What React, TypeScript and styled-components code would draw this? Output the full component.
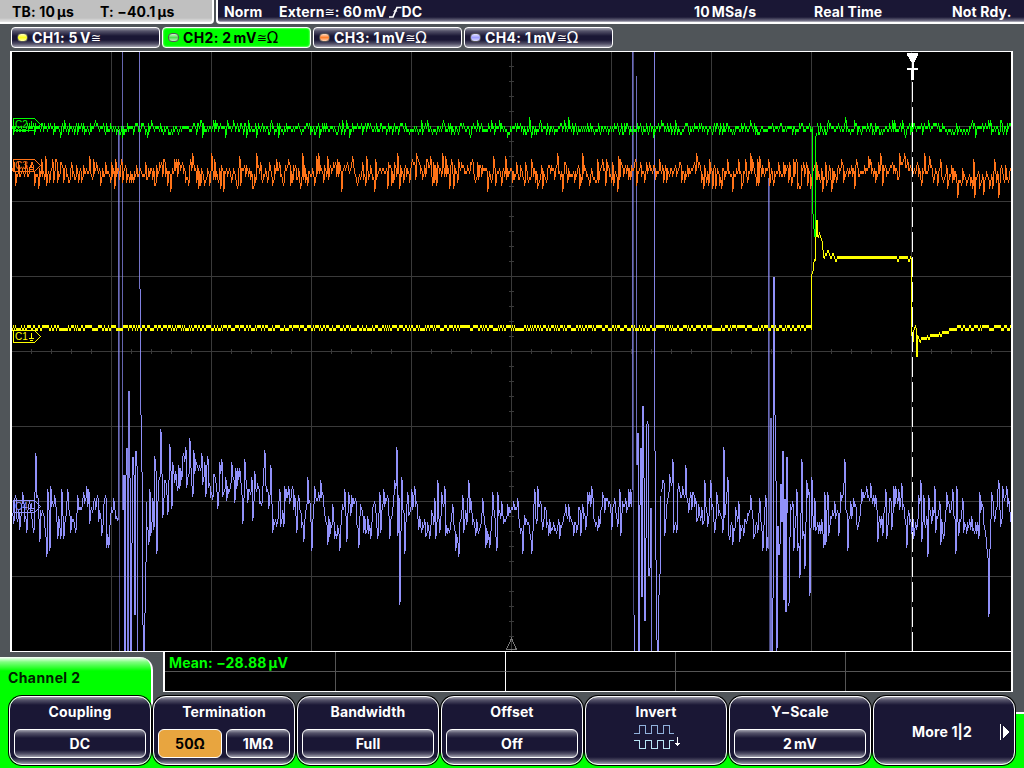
import React from 'react';
import styled, { createGlobalStyle, css } from 'styled-components';

type Point = [number, number];
type Segment = [number, number, number, number?];

const GREEN = '#00ff00';
const ORANGE = '#ff7318';
const YELLOW = '#ffff00';
const VIOLET = '#9191fa';

const createRandom = (seed: number) => {
  let state = seed;
  return () => {
    state = (state * 1664525 + 1013904223) >>> 0;
    return state / 4294967296;
  };
};

const interpolate = (points: Point[], x: number) => {
  for (let i = 1; i < points.length; i += 1) {
    const [x0, y0] = points[i - 1];
    const [x1, y1] = points[i];
    if (x <= x1) return y0 + ((y1 - y0) * Math.max(0, x - x0)) / (x1 - x0);
  }
  return points[points.length - 1][1];
};

interface NoiseOptions {
  seed: number;
  from: number;
  to: number;
  baseline: Point[];
  spread: number;
  spikeChance?: number;
  spikeSize?: number;
  peaks?: Point[];
}

// one sample per pixel column, quantised to the 3px steps of the ADC
const noise = ({ seed, from, to, baseline, spread, spikeChance = 0, spikeSize = 0, peaks = [] }: NoiseOptions) => {
  const random = createRandom(seed);
  const fixed = new Map(peaks);
  const samples: Point[] = [];
  for (let x = from; x <= to; x += 1) {
    const base = interpolate(baseline, x);
    let value = base + (random() + random() - 1) * spread;
    if (random() < spikeChance) value = base + (random() > 0.5 ? 1 : -1) * spikeSize * (0.6 + random() * 0.4);
    samples.push([x, fixed.get(x) ?? Math.round(value / 3) * 3 + 1]);
  }
  return samples;
};

// each column runs from its own level up to, but not over, the previous one
const tracePath = (samples: Point[]) =>
  samples
    .map(([x, y], i) => {
      const previous = i > 0 ? samples[i - 1][1] : y;
      const top = previous < y ? Math.min(previous + 2, y - 1) : y - 1;
      const bottom = previous > y ? Math.max(previous - 1, y + 2) : y + 2;
      return `M${x + 0.5} ${top}V${bottom}`;
    })
    .join('');

const ch4Baseline: Point[] = [
  [12, 512], [100, 508], [118, 512], [147, 520], [160, 490], [175, 474], [200, 470], [225, 479],
  [250, 488], [280, 503], [310, 508], [340, 512], [400, 508], [440, 515], [500, 518], [560, 518],
  [600, 508], [660, 498], [690, 500], [720, 512], [780, 520], [830, 512], [870, 504], [910, 514],
  [960, 518], [1011, 502],
];

const ch4Peaks: Point[] = [
  [12, 488], [14, 522], [16, 496], [20, 528], [23, 493], [27, 531], [30, 502], [34, 531], [36, 454], [38, 496],
  [40, 540], [43, 511], [47, 555], [48, 490], [50, 549], [51, 487], [55, 496], [58, 537], [61, 537], [62, 490],
  [64, 537], [68, 490], [71, 531], [76, 531], [78, 496], [83, 499], [87, 487], [89, 490], [90, 522], [98, 496],
  [102, 534], [106, 496], [107, 546], [109, 546], [114, 499], [118, 519],
  [148, 528], [149, 543], [150, 490], [151, 534], [153, 499], [154, 528], [155, 457], [156, 469], [157, 552],
  [159, 481], [161, 430], [163, 516], [166, 481], [168, 513], [170, 445], [172, 507], [173, 463], [178, 489],
  [183, 457], [186, 448], [187, 486], [190, 439], [193, 495], [194, 451], [202, 454], [203, 483], [205, 463],
  [206, 495], [208, 457], [209, 486], [213, 498], [215, 475], [218, 507], [220, 463], [222, 460], [223, 495],
  [229, 492], [232, 463], [235, 501], [236, 469], [240, 469], [243, 522], [245, 460], [248, 501], [252, 478],
  [253, 519], [255, 472], [262, 504], [265, 451], [269, 507], [271, 466], [273, 531], [277, 525], [280, 490],
  [281, 525], [284, 525], [285, 487], [293, 487], [297, 531], [299, 496], [304, 540], [308, 478], [310, 501],
  [312, 549], [315, 487], [319, 493], [321, 481], [323, 493], [328, 543], [333, 505], [335, 537], [337, 537],
  [340, 549], [345, 490], [347, 540], [349, 493], [356, 499], [359, 546], [361, 505], [364, 531], [367, 531],
  [371, 537], [375, 502], [378, 537], [380, 493], [381, 531], [384, 490], [388, 496], [390, 537], [395, 481],
  [397, 448], [398, 534], [399, 496], [400, 603], [402, 478], [405, 552], [408, 493], [410, 513], [412, 490],
  [415, 487], [419, 528], [422, 531], [427, 534], [430, 537], [435, 499], [436, 537], [438, 481], [440, 531],
  [442, 493], [445, 487], [446, 534], [450, 531], [453, 505], [456, 549], [459, 555], [463, 496], [464, 531],
  [469, 481], [471, 499], [476, 534], [481, 525], [483, 499], [486, 546], [490, 546], [493, 493], [495, 516],
  [497, 549], [498, 493], [502, 502], [504, 522], [508, 505], [514, 502], [518, 499], [523, 552], [525, 516],
  [532, 552], [535, 490], [537, 522], [538, 487], [543, 528], [545, 508], [549, 534], [553, 528], [560, 537],
  [565, 514], [569, 505], [574, 534], [577, 531], [580, 508], [581, 534], [583, 505], [586, 528], [588, 493],
  [592, 487], [596, 525], [600, 525], [603, 493], [610, 502], [612, 528], [615, 499], [618, 525], [620, 490],
  [621, 534], [623, 502], [631, 490],
  [662, 490], [664, 481], [665, 534], [670, 475], [673, 460], [674, 531], [677, 531], [678, 490], [682, 496],
  [686, 466], [688, 501], [693, 493], [698, 519], [701, 519], [704, 522], [705, 481], [708, 525], [711, 481],
  [715, 531], [717, 493], [723, 531], [724, 448], [725, 516], [728, 478], [729, 534], [733, 543], [739, 502],
  [740, 540], [744, 534], [747, 522], [751, 496], [754, 537], [758, 531], [760, 499], [763, 549], [766, 496], [767, 549],
  [789, 604], [791, 505], [793, 502], [794, 549], [797, 490], [798, 549], [800, 576], [802, 460], [803, 537],
  [805, 567], [807, 481], [809, 490], [810, 594], [812, 478], [814, 528], [815, 499], [817, 528], [824, 546],
  [825, 493], [826, 543], [828, 493], [829, 534], [835, 502], [839, 534], [841, 493], [845, 460],
  [848, 549], [851, 502], [855, 505], [858, 528], [862, 490], [864, 493], [871, 484], [876, 496], [878, 540],
  [883, 534], [886, 490], [887, 537], [890, 499], [892, 528], [894, 487], [902, 484], [907, 546], [909, 511],
  [914, 537], [917, 528], [919, 496], [921, 481], [922, 540], [924, 496], [928, 555], [929, 496], [932, 522],
  [935, 487], [936, 531], [940, 502], [941, 543], [944, 537], [947, 493], [953, 490], [956, 552], [957, 487],
  [959, 534], [963, 499], [964, 531], [966, 525], [971, 528], [979, 537], [980, 493], [985, 528], [989, 615],
  [990, 550], [992, 493], [996, 511], [999, 481], [1001, 525], [1003, 487], [1007, 487], [1010, 510],
];

const ch4Bursts: Segment[] = [
  [118, 130, 520, 0.75], [119, 130, 651, 0.5], [122, 51, 510, 0.7], [123, 475, 510], [124, 475, 651],
  [125, 475, 651], [126, 448, 475], [127, 448, 651, 0.9], [128, 391, 651, 0.9], [129, 391, 478, 0.9],
  [130, 478, 651], [131, 543, 651], [132, 457, 543], [133, 457, 475], [134, 475, 615], [135, 451, 615],
  [136, 451, 466], [137, 466, 651, 0.9], [139, 51, 289, 0.8], [140, 289, 415, 0.9], [141, 415, 472],
  [142, 472, 625], [143, 625, 651], [144, 613, 651], [145, 562, 613], [146, 502, 562],
  [632, 51, 490, 0.75], [633, 51, 615, 0.5], [634, 615, 651], [636, 76, 465, 0.75], [637, 433, 465],
  [638, 433, 651], [639, 505, 651], [640, 448, 505], [641, 448, 597], [642, 406, 597], [643, 406, 478],
  [644, 478, 621], [645, 538, 621], [646, 424, 538], [647, 421, 424], [648, 424, 576], [649, 568, 576],
  [650, 508, 568], [651, 508, 651, 0.9], [654, 51, 451, 0.9], [655, 451, 560], [656, 560, 640],
  [657, 640, 651], [658, 595, 651], [659, 574, 595], [660, 496, 574],
  [768, 178, 549, 0.75], [769, 178, 651, 0.5], [770, 418, 651, 0.8], [771, 418, 651, 0.8], [772, 598, 651],
  [773, 277, 598], [774, 277, 415], [775, 415, 481], [776, 481, 651], [777, 526, 648], [778, 526, 555],
  [779, 544, 555], [780, 484, 544], [781, 484, 522], [782, 451, 522], [783, 451, 600], [784, 499, 600],
  [785, 499, 612], [786, 457, 612], [787, 457, 513],
];

const ch4Quiet: Point[] = [[12, 117], [147, 631], [661, 767], [788, 1010]];

// the extremes sit on the rising side of each two-column spike
const ch4Extremes = ch4Peaks.map(([x, y]): Point => [x - 1, y]);

// halfway between the noise floor and a straight line through the extremes
const ch4Floor = range(1000).map((i): Point => {
  const x = i + 12;
  return [x, interpolate(ch4Baseline, x) * 0.45 + interpolate(ch4Extremes, x) * 0.55];
});

const ch4Traces = ch4Quiet.map(([from, to], i) =>
  noise({ seed: 41 + i, from, to, baseline: ch4Floor, spread: 14, peaks: ch4Extremes }),
);

const ch3Trace = noise({
  seed: 37,
  from: 12,
  to: 1010,
  baseline: [[12, 171], [800, 171], [915, 170], [950, 177], [1011, 177]],
  spread: 14,
  spikeChance: 0.11,
  spikeSize: 19,
});

const ch2Options = { baseline: [[12, 127], [1011, 127]] as Point[], spread: 7, spikeChance: 0.05, spikeSize: 9 };
const ch2Traces = [
  noise({ ...ch2Options, seed: 5, from: 12, to: 811 }),
  noise({ ...ch2Options, seed: 8, from: 817, to: 1010 }),
];
const ch2Pulse: Segment[] = [[812, 127, 214], [813, 214, 229], [814, 229, 237], [815, 136, 237], [816, 133, 136]];

const idleLine = (seed: number, from: number, to: number) => {
  const random = createRandom(seed);
  let high = true;
  const samples: Point[] = [];
  for (let x = from; x <= to; x += 1) {
    if (random() < 0.42) high = !high;
    samples.push([x, high ? 326 : 329]);
  }
  return samples;
};

const flatTop = () => {
  const samples: Point[] = [];
  for (let x = 824; x <= 910; x += 1) {
    let y = 257;
    if (x < 838) y = [257, 254, 254, 251, 251, 254, 257, 257, 254, 254, 257, 260, 260, 257][x - 824];
    if (x === 897 || x === 898 || x === 908 || x === 909) y = 260;
    samples.push([x, y]);
  }
  return samples;
};

const recovery = () => {
  const samples: Point[] = [];
  for (let x = 918; x <= 955; x += 1) {
    let y = 338;
    if (x < 921) y = [337, 340, 341][x - 918];
    else if (x > 948) y = 329;
    else if (x > 941) y = 332;
    else if (x > 929) y = 335;
    if (x === 927 || x === 939) y -= 2;
    samples.push([x, y]);
  }
  return samples;
};

const ch1Traces = [idleLine(12, 12, 810), flatTop(), recovery(), idleLine(77, 956, 1010)];
const ch1Pulse: Segment[] = [
  [811, 274, 330], [812, 271, 274], [813, 262, 271], [814, 259, 262], [815, 220, 261], [816, 220, 237],
  [817, 220, 237], [818, 235, 238], [819, 232, 235], [820, 235, 238], [821, 238, 241], [822, 241, 250],
  [823, 250, 258], [911, 258, 336], [912, 333, 336], [913, 330, 342], [914, 327, 330], [915, 325, 328],
  [916, 328, 357], [917, 335, 357],
];

function range(count: number) {
  return Array.from({ length: count }, (_, i) => i);
}

const Segments: React.FC<{ segments: Segment[] }> = ({ segments }) => (
  <>
    {segments.map(([x, y1, y2, opacity = 1], i) => (
      <path key={i} d={`M${x + 0.5} ${y1}V${y2}`} opacity={opacity} />
    ))}
  </>
);

interface FlagProps {
  y: number;
  color: string;
  label: string;
}

const Flag: React.FC<FlagProps> = ({ y, color, label }) => (
  <g fill="none" stroke={color}>
    <path d={`M13.5 ${y + 0.5}H34.5L40.5 ${y + 6.5}L34.5 ${y + 12.5}H13.5Z`} />
    <FlagText x={15} y={y + 10} fill={color} stroke="none">
      {label}
    </FlagText>
    <path d={`M31.5 ${y + 3}V${y + 8}M29 ${y + 8.5}H34M30 ${y + 10.5}H33`} />
  </g>
);

const Waveforms: React.FC = () => (
  <Plot viewBox="12 52 999 599" shapeRendering="crispEdges">
    <g stroke="#3a3a3a">
      {range(9).map((i) => (
        <path key={i} d={`M${111.5 + i * 100} 52V651`} />
      ))}
      {range(7).map((i) => (
        <path key={i} d={`M12 ${126.5 + i * 75}H1011`} />
      ))}
      {range(49).map((i) => (
        <path key={i} d={`M${31.5 + i * 20} 349V354`} />
      ))}
      {range(39).map((i) => (
        <path key={i} d={`M509 ${66.5 + i * 15}H514`} />
      ))}
    </g>
    <path d="M506.5 649.5L511.5 638.5L516.5 649.5Z" fill="none" stroke="#777" />

    <g stroke={VIOLET}>
      {ch4Traces.map((samples, i) => (
        <path key={i} d={tracePath(samples)} />
      ))}
      <Segments segments={ch4Bursts} />
    </g>
    <path d={tracePath(ch3Trace)} stroke={ORANGE} />
    <g stroke={YELLOW}>
      {ch1Traces.map((samples, i) => (
        <path key={i} d={tracePath(samples)} />
      ))}
      <Segments segments={ch1Pulse} />
    </g>
    <g stroke={GREEN}>
      {ch2Traces.map((samples, i) => (
        <path key={i} d={tracePath(samples)} />
      ))}
      <Segments segments={ch2Pulse} />
    </g>

    <Flag y={118} color={GREEN} label="C2" />
    <Flag y={159} color={ORANGE} label="C3" />
    <Flag y={330} color={YELLOW} label="C1" />
    <Flag y={500} color={VIOLET} label="C4" />

    <path d="M912.5 82V651" stroke="#fff" strokeDasharray="20 5" />
    <path d="M907 53H918V55L914 63V68H918V70H914V80H911V70H907V68H912V63L907 55Z" fill="#fff" />
  </Plot>
);

const RisingEdge: React.FC = () => (
  <EdgeIcon width="13" height="12" viewBox="0 0 13 12">
    <path d="M0 11H4L8 1.5H12.5" fill="none" stroke="#fff" strokeWidth="1.7" />
    <path d="M4 5.5H8.5L6.5 3.5Z" fill="#fff" />
  </EdgeIcon>
);

const InvertIcon: React.FC = () => (
  <svg width="48" height="26" viewBox="634 723 48 26" fill="none" shapeRendering="crispEdges">
    <path d="M634 732.5H639.5V724.5H645.5V732.5H651.5V724.5H657.5V732.5H663.5V724.5H669.5V732.5H674" stroke="#91b1dc" />
    <path d="M634 739.5H639.5V747.5H645.5V739.5H651.5V747.5H657.5V739.5H663.5V747.5H669.5V739.5H674" stroke="#b9e7f7" />
    <path d="M677.5 736V745M675 742.5H680M676 743.5H679" stroke="#fff" />
  </svg>
);

const channels = [
  { name: 'CH1: 5', unit: 'V', termination: '', color: '#ffff20' },
  { name: 'CH2: 2', unit: 'mV', termination: 'Ω', color: '#50e050', active: true },
  { name: 'CH3: 1', unit: 'mV', termination: 'Ω', color: '#ff8230' },
  { name: 'CH4: 1', unit: 'mV', termination: 'Ω', color: '#a0a0ff' },
];

const App: React.FC = () => (
  <Screen>
    <GlobalStyle />
    <StatusBar>
      <TimePanel>
        <StatusItem $width={88}>TB: 10<Unit>µs</Unit></StatusItem>
        <StatusItem $width={90}>T: −40.1<Unit>µs</Unit></StatusItem>
      </TimePanel>
      <TriggerPanel>
        <StatusItem $width={55}>Norm</StatusItem>
        <StatusItem $width={415}>
          Extern<Symbol>≅</Symbol>: 60<Unit>mV</Unit>
          <RisingEdge />
          DC
        </StatusItem>
        <StatusItem $width={120}>10<Unit>MSa/s</Unit></StatusItem>
        <StatusItem $width={138}>Real Time</StatusItem>
        <StatusItem $width={66}>Not Rdy.</StatusItem>
      </TriggerPanel>
    </StatusBar>

    <ChannelBar>
      {channels.map(({ name, unit, termination, color, active }) => (
        <Channel key={name} $active={active}>
          <Lamp $color={color} />
          {name}
          <Unit>{unit}</Unit>
          <Symbol>≅</Symbol>
          <Symbol $large>{termination}</Symbol>
        </Channel>
      ))}
    </ChannelBar>

    <Scope>
      <Waveforms />
    </Scope>

    <InfoRow>
      <MenuTab>Channel 2</MenuTab>
      <Measurements>
        <Reading>Mean: −28.88<Unit>µV</Unit></Reading>
        <Cell />
        <Cell $bright />
        <Cell />
        <Cell />
        {range(5).map((i) => (
          <Cell key={i} $first={i === 0} $bright={i === 2} $lower />
        ))}
      </Measurements>
    </InfoRow>

    <Menu>
      <SoftKey>
        <KeyLabel>Coupling</KeyLabel>
        <Options><Option>DC</Option></Options>
      </SoftKey>
      <SoftKey>
        <KeyLabel>Termination</KeyLabel>
        <Options>
          <Option $selected>50Ω</Option>
          <Option>1MΩ</Option>
        </Options>
      </SoftKey>
      <SoftKey>
        <KeyLabel>Bandwidth</KeyLabel>
        <Options><Option>Full</Option></Options>
      </SoftKey>
      <SoftKey>
        <KeyLabel>Offset</KeyLabel>
        <Options><Option>Off</Option></Options>
      </SoftKey>
      <SoftKey>
        <KeyLabel>Invert</KeyLabel>
        <IconSlot><InvertIcon /></IconSlot>
      </SoftKey>
      <SoftKey>
        <KeyLabel>Y−Scale</KeyLabel>
        <Options><Option>2<Unit>mV</Unit></Option></Options>
      </SoftKey>
      <MoreKey>
        More 1|2
        <svg width="10" height="16" viewBox="0 0 10 16" shapeRendering="crispEdges">
          <path d="M0.5 0V16" stroke="#fff" />
          <path d="M3 2L9 8L3 14Z" fill="#fff" />
        </svg>
      </MoreKey>
    </Menu>
  </Screen>
);

export default App;

const GlobalStyle = createGlobalStyle`
  * {
    box-sizing: border-box;
  }

  body {
    margin: 0;
    background: #505559;
  }
`;

const darkPanel = css`
  background: linear-gradient(
    to bottom,
    #a3a3b0 0,
    #55536a 3px,
    #1a1735 8px,
    #1a1735 calc(100% - 7px),
    #55536a calc(100% - 3px),
    #a3a3b0 100%
  );
`;

const Screen = styled.div`
  display: flex;
  flex-direction: column;
  width: 1024px;
  height: 768px;
  overflow: hidden;
  background: #505559;
  color: #fff;
  font-family: Inter, 'Liberation Sans', sans-serif;
  font-size: 14px;
  font-weight: 700;
  line-height: 16px;
  letter-spacing: 0.15px;
  white-space: nowrap;
`;

const StatusBar = styled.div`
  display: flex;
  gap: 2px;
  height: 24px;
  flex: none;
`;

const TimePanel = styled.div`
  display: flex;
  width: 214px;
  padding: 4px 0 0 12px;
  color: #000;
  background: linear-gradient(#c0c0c0 18px, #e8e8e8 22px);
  border-right: 2px solid #fff;
  border-bottom: 2px solid #fff;
  border-bottom-right-radius: 4px;
`;

const TriggerPanel = styled.div`
  display: flex;
  flex: 1;
  padding: 4px 0 0 6px;
  background: linear-gradient(#1a1735 17px, #77758a 21px, #d0d0d8 22px);
  border-left: 2px solid #fff;
  border-bottom: 2px solid #fff;
  border-bottom-left-radius: 4px;
`;

const StatusItem = styled.div<{ $width: number }>`
  display: flex;
  width: ${({ $width }) => $width}px;
  white-space: pre;
`;

const Unit = styled.span`
  margin-left: 2px;
`;

const Symbol = styled.span<{ $large?: boolean }>`
  font-family: 'DejaVu Sans', sans-serif;
  font-size: ${({ $large }) => ($large ? 15 : 12)}px;
  font-weight: 400;
  letter-spacing: 0;
`;

const EdgeIcon = styled.svg`
  margin: 2px 0 0 2px;
`;

const ChannelBar = styled.div`
  display: flex;
  flex: none;
  gap: 2px;
  height: 27px;
  padding: 3px 0 3px 11px;
`;

const Channel = styled.div<{ $active?: boolean }>`
  display: flex;
  align-items: center;
  width: 149px;
  padding-left: 5px;
  border: 1px solid #fff;
  border-radius: 4px;
  letter-spacing: 0.35px;
  ${darkPanel}
  ${({ $active }) =>
    $active &&
    css`
      color: #000;
      background: #00ff00;
      box-shadow: inset 0 0 2px #fff;
    `}
`;

const Lamp = styled.i<{ $color: string }>`
  width: 11px;
  height: 9px;
  margin-right: 4px;
  border: 1px solid #555;
  border-radius: 4px;
  background: linear-gradient(#fff -20%, ${({ $color }) => $color} 50%, #fff 130%);
`;

const Scope = styled.div`
  flex: none;
  width: 1003px;
  height: 601px;
  margin-left: 10px;
  border: solid #fff;
  border-width: 1px 2px;
  background: #000;
`;

const Plot = styled.svg`
  display: block;
  width: 999px;
  height: 599px;
`;

const FlagText = styled.text`
  font: 400 10px 'Liberation Sans', sans-serif;
  letter-spacing: 0;
`;

const InfoRow = styled.div`
  display: flex;
  flex: none;
  gap: 10px;
  height: 43px;
  margin-top: -1px;
  border-top: 1px solid transparent;
  background: linear-gradient(#fff, #fff) 10px 0 / 1003px 1px no-repeat border-box;
`;

const MenuTab = styled.div`
  width: 153px;
  margin-top: 5px;
  padding: 13px 0 0 8px;
  color: #002000;
  letter-spacing: 0.4px;
  background: linear-gradient(#fff, #80ff80 5px, #00ff00 14px);
  border-right: 2px solid #fff;
  border-top-right-radius: 13px;
`;

const Measurements = styled.div`
  display: grid;
  grid-template-columns: 170px 170px 170px 170px 1fr;
  grid-template-rows: 19px 20px;
  width: 850px;
  height: 40px;
  color: #00ff00;
  background: #000;
  border: solid #fff;
  border-width: 0 2px 1px;
`;

const Reading = styled.div`
  padding: 3px 0 0 4px;
`;

const Cell = styled.div<{ $bright?: boolean; $first?: boolean; $lower?: boolean }>`
  border: 0 solid #555;
  border-left-width: ${({ $first }) => ($first ? 0 : 1)}px;
  border-left-color: ${({ $bright }) => ($bright ? '#fff' : '#555')};
  border-top-width: ${({ $lower }) => ($lower ? 1 : 0)}px;
`;

const Menu = styled.div`
  display: flex;
  flex: 1;
  gap: 2px;
  padding: 2px 0 3px 9px;
  background:
    linear-gradient(#00ff00, #00ff00) 0 0 / 151px 100% no-repeat,
    linear-gradient(#fff, #fff) 151px 0 / 2px 18px no-repeat,
    linear-gradient(transparent 18px, #fff 18px, #fff 20px, #00ff00 20px);
`;

const SoftKey = styled.div`
  display: flex;
  flex-direction: column;
  flex: none;
  width: 142px;
  height: 69px;
  padding: 7px 4px 6px;
  border: 1px solid #fff;
  border-radius: 13px;
  box-shadow: 0 0 0 1px #000;
  ${darkPanel}
`;

const MoreKey = styled(SoftKey)`
  flex-direction: row;
  align-items: center;
  justify-content: space-between;
  padding: 2px 4px 0 38px;
`;

const KeyLabel = styled.div`
  text-align: center;
`;

const Options = styled.div`
  display: flex;
  gap: 4px;
  height: 29px;
  margin-top: auto;
`;

const Option = styled.div<{ $selected?: boolean }>`
  display: flex;
  flex: 1;
  align-items: center;
  justify-content: center;
  border: 1px solid #fff;
  border-radius: 6px;
  ${darkPanel}
  ${({ $selected }) =>
    $selected &&
    css`
      color: #000;
      background: #e8a53f;
    `}
`;

const IconSlot = styled.div`
  display: flex;
  justify-content: center;
  padding: 4px 0 0 3px;
`;
